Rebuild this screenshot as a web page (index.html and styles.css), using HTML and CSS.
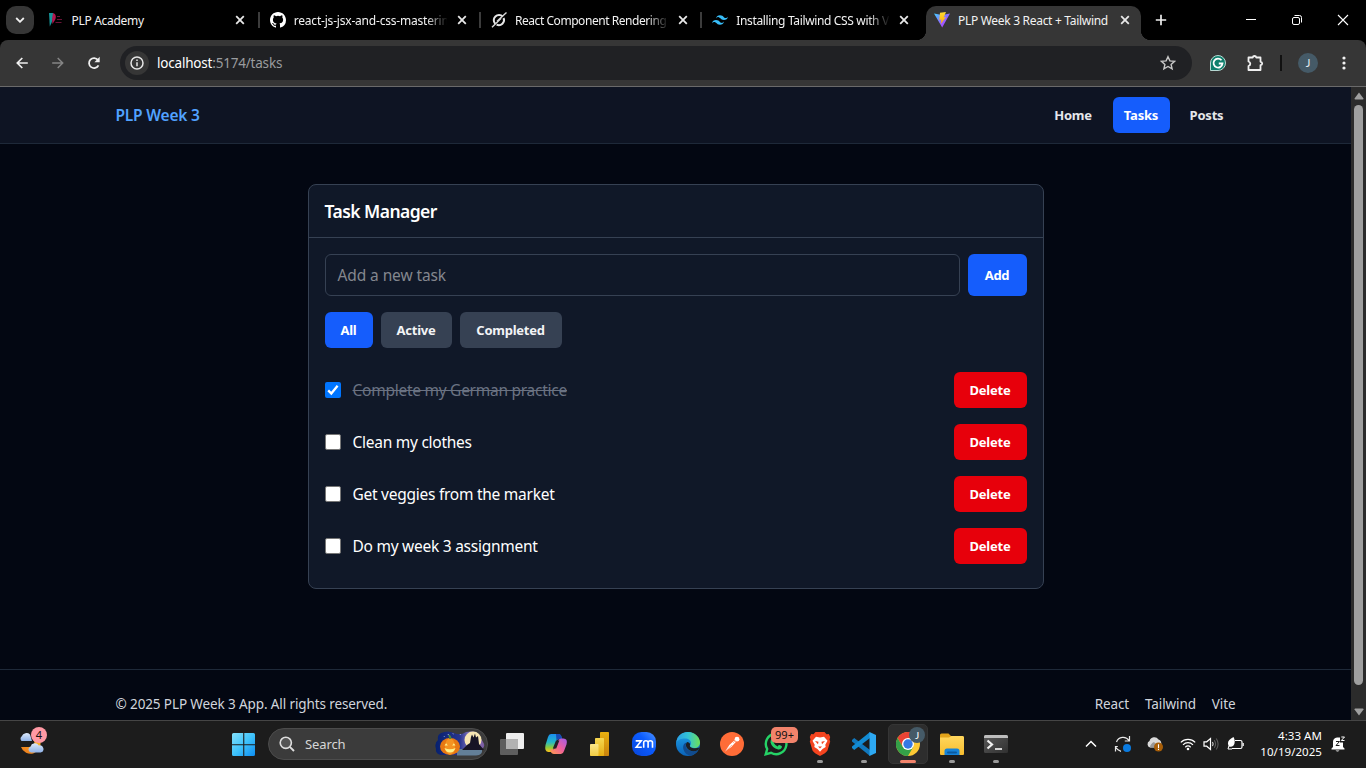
FILE: index.html
```html
<!DOCTYPE html>
<html lang="en">
<head>
<meta charset="utf-8">
<title>PLP Week 3 React + Tailwind</title>
<link rel="stylesheet" href="styles.css">
</head>
<body>
<svg class="defs" width="0" height="0">
  <defs>
    <symbol id="x" viewBox="0 0 10 10"><path d="M1.2 1.2l7.6 7.6M8.8 1.2L1.2 8.8" stroke="#e8e8e8" stroke-width="1.8" fill="none"/></symbol>
    <linearGradient id="gWin" x1="0" y1="0" x2="1" y2="1"><stop offset="0" stop-color="#84e0fb"/><stop offset=".5" stop-color="#3fc3fb"/><stop offset="1" stop-color="#0d8df2"/></linearGradient>
    <linearGradient id="gVite" x1="0" y1="0" x2="1" y2="1"><stop offset="0" stop-color="#41d1ff"/><stop offset=".6" stop-color="#9a5cff"/><stop offset="1" stop-color="#bd34fe"/></linearGradient>
    <linearGradient id="gBolt" x1="0" y1="0" x2="0" y2="1"><stop offset="0" stop-color="#ffdd35"/><stop offset="1" stop-color="#ffa800"/></linearGradient>
    <linearGradient id="gCloud" x1="0" y1="0" x2="0" y2="1"><stop offset="0" stop-color="#dce9fb"/><stop offset="1" stop-color="#8fb2e8"/></linearGradient>
    <linearGradient id="gMoon" x1="0" y1="1" x2="1" y2="0"><stop offset="0" stop-color="#e8731a"/><stop offset="1" stop-color="#fdbb2d"/></linearGradient>
    <linearGradient id="gCopA" x1="0" y1="0" x2="0" y2="1"><stop offset="0" stop-color="#1a8df0"/><stop offset=".45" stop-color="#22b8c8"/><stop offset=".75" stop-color="#8ccb3c"/><stop offset="1" stop-color="#ffc21a"/></linearGradient>
    <linearGradient id="gCopB" x1="1" y1="0" x2="0" y2="1"><stop offset="0" stop-color="#a25be8"/><stop offset=".5" stop-color="#ee5f9c"/><stop offset="1" stop-color="#ff9d4a"/></linearGradient>
    <linearGradient id="gZoom" x1="0" y1="1" x2="1" y2="0"><stop offset="0" stop-color="#0845d8"/><stop offset=".6" stop-color="#0b5cff"/><stop offset="1" stop-color="#4c92ff"/></linearGradient>
    <linearGradient id="gEdgeA" x1="0" y1="0" x2="1" y2="0"><stop offset="0" stop-color="#2a9ee6"/><stop offset=".5" stop-color="#33c4d4"/><stop offset="1" stop-color="#6ee055"/></linearGradient>
    <linearGradient id="gEdgeB" x1="0" y1="0" x2="0" y2="1"><stop offset="0" stop-color="#1fa2e8"/><stop offset="1" stop-color="#0a62b8"/></linearGradient>
    <linearGradient id="gFolder" x1="0" y1="0" x2="0" y2="1"><stop offset="0" stop-color="#ffd75e"/><stop offset="1" stop-color="#f8bd2e"/></linearGradient>
    <linearGradient id="gTerm" x1="0" y1="0" x2="1" y2="1"><stop offset="0" stop-color="#5a5a5a"/><stop offset="1" stop-color="#303030"/></linearGradient>
    <linearGradient id="gNight" x1="0" y1="0" x2="1" y2="0"><stop offset="0" stop-color="#06206e"/><stop offset=".5" stop-color="#27348f"/><stop offset=".75" stop-color="#9c86c8"/><stop offset="1" stop-color="#77599f"/></linearGradient>
    <linearGradient id="gBi" x1="0" y1="0" x2="0" y2="1"><stop offset="0" stop-color="#e9b010"/><stop offset="1" stop-color="#c9820d"/></linearGradient>
    <linearGradient id="gBj" x1="0" y1="0" x2="0" y2="1"><stop offset="0" stop-color="#f6d751"/><stop offset="1" stop-color="#e6ad10"/></linearGradient>
    <linearGradient id="gBk" x1="0" y1="0" x2="0" y2="1"><stop offset="0" stop-color="#fbe68a"/><stop offset="1" stop-color="#f2cc42"/></linearGradient>
  </defs>
</svg>

<header class="tabstrip">
  <button class="tab-search" aria-label="Search tabs"><svg width="10" height="6" viewBox="0 0 10 6"><path d="M1.2 1l3.8 3.8L8.8 1" fill="none" stroke="#f0f0f0" stroke-width="1.8"/></svg></button>
  <div class="tab">
    <svg class="fav" width="16" height="16" viewBox="0 0 16 16"><path d="M1 1h4v5L3.500 11 1.800 14.500z" fill="#15969a"/><path d="M5 1c3 1 3.500 4 2 7L4.500 12 4 7z" fill="#b3174f"/><path d="M9 4.500h3M9 7.500h5M7.500 10.500h6" stroke="#6b1236" stroke-width="1.200"/></svg>
    <span class="tab-title t1">PLP Academy</span><svg class="tx" width="10" height="10"><use href="#x"/></svg>
  </div>
  <div class="tab">
    <svg class="fav" width="16" height="16" viewBox="0 0 16 16"><path fill="#fff" d="M8 0C3.580 0 0 3.580 0 8c0 3.540 2.290 6.530 5.470 7.590.4.070.55-.17.55-.38 0-.19-.01-.82-.01-1.490-2.010.37-2.530-.49-2.690-.94-.09-.23-.48-.94-.82-1.130-.28-.15-.68-.52-.01-.53.63-.01 1.080.58 1.230.82.72 1.210 1.870.87 2.330.66.07-.52.28-.87.51-1.070-1.780-.2-3.640-.89-3.640-3.950 0-.87.31-1.590.82-2.150-.08-.2-.36-1.020.08-2.120 0 0 .67-.21 2.200.82a7.600 7.600 0 0 1 4 0c1.530-1.040 2.200-.82 2.200-.82.44 1.100.16 1.920.08 2.120.51.56.82 1.270.82 2.150 0 3.070-1.870 3.750-3.650 3.950.29.25.54.73.54 1.480 0 1.070-.01 1.930-.01 2.200 0 .21.15.46.55.38A8 8 0 0 0 16 8c0-4.420-3.580-8-8-8z"/></svg>
    <span class="tab-title t2">react-js-jsx-and-css-masterin</span><svg class="tx" width="10" height="10"><use href="#x"/></svg>
  </div>
  <div class="tab">
    <svg class="fav" width="16" height="16" viewBox="0 0 16 16"><path d="M11.800 4.600A5.200 5.200 0 1 0 4.200 11.800M12.600 6a5.200 5.200 0 0 1-7 6.700" fill="none" stroke="#e6e6e6" stroke-width="2"/><path d="M15.500.5L6 9.300M1 15.300L10.200 6.200" stroke="#d8d8d8" stroke-width="1.400"/></svg>
    <span class="tab-title t3">React Component Rendering</span><svg class="tx" width="10" height="10"><use href="#x"/></svg>
  </div>
  <div class="tab">
    <svg class="fav" width="16" height="16" viewBox="0 0 24 24"><path fill="#38bdf8" d="M12 4.800c-3.200 0-5.200 1.600-6 4.800 1.200-1.600 2.600-2.200 4.200-1.800.913.228 1.565.89 2.288 1.624C13.666 10.618 15.027 12 18 12c3.200 0 5.200-1.600 6-4.800-1.200 1.600-2.600 2.200-4.200 1.800-.913-.228-1.565-.89-2.288-1.624C16.337 6.182 14.976 4.800 12 4.800zM6 12c-3.200 0-5.200 1.600-6 4.800 1.200-1.600 2.600-2.200 4.200-1.800.913.228 1.565.89 2.288 1.624 1.177 1.194 2.538 2.576 5.512 2.576 3.200 0 5.200-1.600 6-4.800-1.200 1.600-2.600 2.200-4.200 1.800-.913-.228-1.565-.89-2.288-1.624C10.337 13.382 8.976 12 6 12z"/></svg>
    <span class="tab-title t4">Installing Tailwind CSS with V</span><svg class="tx" width="10" height="10"><use href="#x"/></svg>
  </div>
  <div class="tab active">
    <svg class="fav" width="16" height="16" viewBox="0 0 16 16"><path d="M0 1.500l8 1.500 8-1.500L8.200 15.600z" fill="url(#gVite)"/><path d="M12 0L6 .8 5.300 8l2.200-.4-.8 4.400L12 5l-2.400.4z" fill="url(#gBolt)"/></svg>
    <span class="tab-title t5">PLP Week 3 React + Tailwind</span><svg class="tx" width="10" height="10"><use href="#x"/></svg>
  </div>
  <svg class="plus" width="12" height="12" viewBox="0 0 12 12"><path d="M6 .8v10.400M.8 6h10.400" stroke="#eee" stroke-width="1.700"/></svg>
  <div class="winctl">
    <svg width="12" height="12" viewBox="0 0 12 12"><path d="M1 5.500h10" stroke="#fff"/></svg>
    <svg width="12" height="12" viewBox="0 0 12 12"><rect x="1.500" y="3.500" width="7" height="7" rx="1.500" fill="none" stroke="#fff"/><path d="M3.500 1.500h5a2 2 0 0 1 2 2v5" fill="none" stroke="#fff"/></svg>
    <svg width="12" height="12" viewBox="0 0 12 12"><path d="M1 1l10 10M11 1L1 11" stroke="#fff" stroke-width="1.100"/></svg>
  </div>
</header>

<div class="toolbar">
  <svg class="back" width="12" height="12" viewBox="0 0 12 12"><path d="M11.800 6H1.500M6.300 1L1.300 6l5 5" fill="none" stroke="#f0f0f0" stroke-width="1.700"/></svg>
  <svg class="fwd" width="12" height="12" viewBox="0 0 12 12"><path d="M.2 6h10.300M5.700 1l5 5-5 5" fill="none" stroke="#858585" stroke-width="1.500"/></svg>
  <svg class="reload" width="14" height="14" viewBox="0 0 14 14"><path d="M11.500 9.300A5 5 0 1 1 11 4" fill="none" stroke="#f0f0f0" stroke-width="1.800"/><path d="M12.700.8v5.400H7.400z" fill="#f0f0f0"/></svg>
  <div class="omnibox">
    <span class="info"><svg width="14" height="14" viewBox="0 0 14 14"><circle cx="7" cy="7" r="6" fill="none" stroke="#e6e6e6" stroke-width="1.500"/><path d="M7 6.300v4M7 3.500v1.600" stroke="#e6e6e6" stroke-width="1.500"/></svg></span>
    <span class="url">localhost<i>:5174/tasks</i></span>
    <svg class="star" width="16" height="16" viewBox="0 0 16 16"><path d="M8 1.700l1.900 4.200 4.700.4-3.500 3.100 1 4.500L8 11.500l-4.100 2.400 1-4.500-3.500-3.100 4.700-.4z" fill="none" stroke="#c8c8c8" stroke-width="1.400"/></svg>
  </div>
  <svg class="gram" width="16" height="16" viewBox="0 0 16 16"><path d="M.5 15.500V8A7.500 7.500 0 1 1 8 15.500z" fill="#0f7f6c" stroke="#b7d8d2" stroke-width="1"/><path d="M11.500 5.200A4.500 4.500 0 1 0 12.500 8.500H8.800" fill="none" stroke="#fff" stroke-width="1.800"/></svg>
  <svg class="puzzle" width="18" height="18" viewBox="0 0 18 18"><path d="M2.500 3.500h4.200q.3-1.500 1.800-1.500t1.800 1.500h4.200v4.300q1.700.2 1.700 1.700t-1.700 1.700v4.800h-12v-4q1.800-.6 1.800-2.200t-1.800-2.300z" fill="none" stroke="#f0f0f0" stroke-width="1.800" stroke-linejoin="round"/></svg>
  <span class="bar"></span>
  <span class="avatar">J</span>
  <svg class="dots" width="4" height="14" viewBox="0 0 4 14"><g fill="#f2f2f2"><circle cx="2" cy="2" r="1.600"/><circle cx="2" cy="7" r="1.600"/><circle cx="2" cy="12" r="1.600"/></g></svg>
</div>

<div class="viewport">
  <div class="page">
    <nav class="nav">
      <div class="wrap">
        <a class="brand">PLP Week 3</a>
        <div class="links"><a class="link home">Home</a><a class="link current">Tasks</a><a class="link posts">Posts</a></div>
      </div>
    </nav>
    <main class="main">
      <section class="card">
        <h1 class="card-head">Task Manager</h1>
        <div class="card-body">
          <div class="add-row"><div class="field">Add a new task</div><button class="btn blue add">Add</button></div>
          <div class="filters"><button class="btn blue all">All</button><button class="btn gray act">Active</button><button class="btn gray comp">Completed</button></div>
          <ul class="list">
            <li class="item"><span class="check on"><svg width="16" height="16" viewBox="0 0 16 16"><path d="M3.200 8.400l3.100 3.100 6.300-7.700" fill="none" stroke="#fff" stroke-width="2.300"/></svg></span><span class="label done">Complete my German practice</span><button class="btn red">Delete</button></li>
            <li class="item"><span class="check"></span><span class="label">Clean my clothes</span><button class="btn red">Delete</button></li>
            <li class="item"><span class="check"></span><span class="label">Get veggies from the market</span><button class="btn red">Delete</button></li>
            <li class="item"><span class="check"></span><span class="label">Do my week 3 assignment</span><button class="btn red">Delete</button></li>
          </ul>
        </div>
      </section>
    </main>
    <footer class="foot">
      <div class="wrap"><span class="copy">© 2025 PLP Week 3 App. All rights reserved.</span><div class="foot-links"><a>React</a><a>Tailwind</a><a>Vite</a></div></div>
    </footer>
  </div>
  <div class="scroll">
    <svg width="10" height="8" viewBox="0 0 10 8"><path d="M5 .5L9.500 6.500Q9.500 7.500 8.800 7.500H1.200Q.5 7.500.5 6.500z" fill="#9f9f9f"/></svg>
    <span class="thumb"></span>
    <svg width="10" height="8" viewBox="0 0 10 8"><path d="M5 7.500L9.500 1.500Q9.500.5 8.800.5H1.200Q.5.5.5 1.500z" fill="#9f9f9f"/></svg>
  </div>
</div>

<footer class="taskbar">
  <div class="widget">
    <svg width="26" height="27" viewBox="0 0 26 27"><path d="M3.500 12a3 3 0 0 1 .3-4.700A5 5 0 0 1 12 5.500l2 6.500z" fill="url(#gCloud)"/><path d="M3 18h8q7-1 5-6l6-.5a10 10 0 0 1-19 6.500z" fill="url(#gMoon)"/><path d="M13 23.500a3 3 0 0 1-.5-5.800 4.500 4.500 0 0 1 8.300-1.200 3.600 3.600 0 0 1 2 7z" fill="url(#gCloud)"/></svg>
    <span class="wbadge">4</span>
  </div>
  <svg class="start" width="24" height="24" viewBox="0 0 24 24"><path d="M1.500 0H11.200V11.200H0V1.500Q0 0 1.500 0zM12.300 0h9.200Q23 0 23 1.500v9.700H12.300zM0 12.300h11.200V23H1.500Q0 23 0 21.500zM12.300 12.300H23v9.200q0 1.500-1.500 1.500h-9.200z" fill="url(#gWin)"/></svg>
  <div class="search">
    <svg class="mag" width="16" height="16" viewBox="0 0 16 16"><circle cx="6.800" cy="6.800" r="5.600" fill="#555" stroke="#dedede" stroke-width="1.600"/><path d="M10.800 10.800l4.200 4.200" stroke="#dedede" stroke-width="1.900"/></svg>
    <span class="stext">Search</span>
    <svg class="halloween" width="50" height="26" viewBox="0 0 50 26"><path d="M6 2Q13-1 19 2T31 1Q42-1 45 5q1 3 3 6 3 4-1 7 0 5-7 6H8Q0 24 1 18-1 12 3 9 2 4 6 2z" fill="url(#gNight)"/><path d="M22 18h25q1 6-6 6.500H22z" fill="#637f98"/><circle cx="38" cy="9" r="8.500" fill="#f7e6b4"/><path d="M27 19l5-5 3-2 1-6 1-2.500 1.500 3 1.500-4 1 4 2-1.500 1 8 5 6z" fill="#171425"/><path d="M13 3l.4.800M18 2.500l.4.700M25 3l.4.700M9 5l.3.600" stroke="#c9d6ff" stroke-width="1"/><ellipse cx="15" cy="15.500" rx="10" ry="8.500" fill="#e87812"/><ellipse cx="15" cy="15.500" rx="5" ry="8.200" fill="#f59322"/><path d="M14 8q1-2-1-3.500l1.800-.8q2 2 1.500 4.300z" fill="#4e873b"/><path d="M9.500 14.500l1.700-2.300 1.600 2.300zM17.200 14.500l1.600-2.300 1.700 2.300zM9.500 17q5.500 2.500 11 0-1.500 4.500-5.500 4.500T9.500 17z" fill="#fff08a"/></svg>
  </div>
  <div class="apps">
    <div class="app"><svg width="24" height="24" viewBox="0 0 24 24"><rect x="6" y="1" width="18" height="16" rx="1" fill="#eee"/><rect x="0" y="7" width="18" height="16" rx="1" fill="#5e5e5e"/><rect x="6" y="7" width="12" height="10" fill="#b2b2b2"/></svg></div>
    <div class="app"><svg width="24" height="24" viewBox="0 0 24 24"><path d="M7 2h7q2.600 0 3.500 3l.7 2h-3q-2 0-2.700 2.200L9.500 17q-.8 3-3 3H4.500Q.2 20 1.500 13L4 5q.8-3 3-3z" fill="url(#gCopA)"/><path d="M12 2h2.500q2.500 0 3.200 3l.6 2h-3.100q-2 0-2.700 2z" fill="#174ab5"/><path d="M17 22h-7q-2.600 0-3.500-3l-.3-1.500h2.500Q10.500 17.500 11.300 15l2.700-6q.8-2.500 3-2.500h2.500Q24 6.500 22.500 12.500L20 19q-.8 3-3 3z" fill="url(#gCopB)"/><path d="M12 8.500h3.400l-3.200 8H8.800z" fill="#23202a"/></svg></div>
    <div class="app"><svg width="24" height="24" viewBox="0 0 24 24"><rect x="12" y="0" width="9" height="24" rx=".8" fill="url(#gBi)"/><rect x="7" y="6" width="9" height="18" rx=".8" fill="url(#gBj)"/><rect x="2" y="12" width="8.500" height="12" rx=".8" fill="url(#gBk)"/></svg></div>
    <div class="app"><svg width="24" height="24" viewBox="0 0 24 24"><rect width="24" height="24" rx="9.500" fill="url(#gZoom)"/><path d="M3.700 8.900h5.500l-5 6.300h5.600M11.700 15.800V10.500q0-1.700 2.200-1.700t2.200 1.700v5.300M16.100 15.800v-5.300q0-1.700 2.200-1.700t2.200 1.700v5.300" fill="none" stroke="#fff" stroke-width="1.600"/></svg></div>
    <div class="app"><svg width="24" height="24" viewBox="0 0 24 24"><circle cx="12" cy="12" r="12" fill="url(#gEdgeB)"/><path d="M.3 10.500C1 4 6 0 12 0c7 0 12 5.500 12 10.500 0 3.500-2.700 5.500-5.500 5.500-3 0-4.500-1-4.500-2s1-1 1-3c0-2.500-2.500-4.500-6-4.500C5 6.500 1.500 8 .3 10.500z" fill="url(#gEdgeA)"/><path d="M10.500 10.500c-3 1-4 4-3 7 1.200 4 5 6.500 8 6 3-1 5.500-3 6.800-5.500-5 3-12.500.5-12.500-4.500 0-1.200.2-2 .7-3z" fill="#114b8e"/><path d="M22.300 18c-4.500 2.500-9.800 1.200-11.700-2.500-1.200-2.200-.6-4.300.6-5.500 2.500.2 3.300 2 2.700 3.400-.5 1.600 3 4 9.600 2.100z" fill="#1d2024"/></svg></div>
    <div class="app"><svg width="24" height="24" viewBox="0 0 24 24"><circle cx="12" cy="12" r="12" fill="#ff6c37"/><path d="M5.500 19l3.800-6 5-4.500 1.500 1.500-4.500 5z" fill="#fff"/><circle cx="17" cy="7.200" r="2.400" fill="#fff"/><path d="M5 19.500l7-6.500M13 11l2.500-2.500" stroke="#ff9c7a" stroke-width=".7"/></svg></div>
    <div class="app"><svg width="24" height="24" viewBox="0 0 24 24"><path d="M1.700 22.300L3.200 17A10.300 10.300 0 1 1 7 20.800z" fill="none" stroke="#25d366" stroke-width="2.400"/><path d="M8 6.500q1.200-.7 1.800.8l.7 1.800q.2.600-.9 1.700 1.500 2.700 4 3.600l1.200-1.400q.5-.4 2.800 1 .6.400.2 1.500-1 2.400-3.600 2Q8 16 6.500 10.500 6.200 8 8 6.500z" fill="#25d366"/></svg><span class="count">99+</span></div>
    <div class="app"><svg width="24" height="24" viewBox="0 0 24 24"><path d="M7.500 0h9l2 2.300 2.300-.3 1.400 3-.7 2.500.7 2-2.700 9Q18 21 12 24 6 21 4.500 18.500L1.800 9.500l.7-2L1.800 5l1.400-3 2.300.3z" fill="#f4441f"/><path d="M8 4.800l4 .7 4-.7 3.500 4-2.200 4 .4 2.200-3.200 1.900L12 19.800l-2.500-2.900L6.300 15l.4-2.200-2.200-4z" fill="#fff"/><path d="M7 9l3.500.8-.5 2.400zM17 9l-3.500.8.5 2.400zM10 14.500h4l-2 2z" fill="#f4441f"/></svg><span class="run"></span></div>
    <div class="app"><svg width="24" height="24" viewBox="0 0 24 24"><path d="M0 8L2.200 6 18 18v6L0 9.500z" fill="#1178bd"/><path d="M0 16l2.200 2L18 6V0L0 14.500z" fill="#128bd3"/><path d="M17.500 0L24 3v18l-6.500 3z" fill="#2da9f3"/></svg><span class="run"></span></div>
    <div class="app on"><svg width="24" height="24" viewBox="0 0 24 24"><circle cx="12" cy="12" r="12" fill="#fcc934"/><path d="M1.600 6A12 12 0 0 1 22.400 6H12L6.800 15z" fill="#e94335"/><path d="M1.600 6A12 12 0 0 0 12 24l5.200-9-10.400 0z" fill="#34a048"/><circle cx="12" cy="12" r="6" fill="#fff"/><circle cx="12" cy="12" r="4.700" fill="#3478e5"/></svg><span class="cavatar">J</span><span class="run wide"></span></div>
    <div class="app"><svg width="24" height="24" viewBox="0 0 24 24"><path d="M0 3q0-1.500 1.500-1.500h7L11 4h11q2 0 2 1.500V10H0z" fill="#e2a31a"/><path d="M0 5.500h9L11.500 4H22.500Q24 4 24 5.500V22q0 1-1 1H1q-1 0-1-1z" fill="url(#gFolder)"/><path d="M4.500 23v-4q0-2.500 2.500-2.500h10q2.500 0 2.500 2.500v4z" fill="#1683d8"/><rect x="7" y="19.500" width="10" height="2" rx="1" fill="#0b5a9f"/></svg><span class="run"></span></div>
    <div class="app"><svg width="24" height="24" viewBox="0 0 24 24"><rect y="3" width="24" height="18" rx="1.500" fill="url(#gTerm)"/><path d="M0 6V4.500Q0 3 1.500 3h21Q24 3 24 4.500V6z" fill="#bdbdbd"/><path d="M3.500 8.500l4.500 4-4.500 4" fill="none" stroke="#f0f0f0" stroke-width="2.200"/><path d="M11 17h7" stroke="#f0f0f0" stroke-width="1.700"/></svg><span class="run"></span></div>
  </div>
  <div class="tray">
    <svg class="caret" width="12" height="8" viewBox="0 0 12 8"><path d="M1 6.500l5-5 5 5" fill="none" stroke="#fff" stroke-width="1.500"/></svg>
    <svg class="sync" width="18" height="18" viewBox="0 0 18 18"><path d="M2.500 7A7 7 0 0 1 15 5.500M15.500 1v5H10.800M3.800 11.500H1.500v5M2 12.500q1.500 3 5 3.800" fill="none" stroke="#e8e8e8" stroke-width="1.200"/><circle cx="13" cy="13" r="4" fill="#0a7be0"/></svg>
    <svg class="cloud" width="18" height="16" viewBox="0 0 18 16"><path d="M4 11.500A3.500 3.500 0 0 1 3.500 5 5 5 0 0 1 12.500 3.500 4 4 0 0 1 15 9v2.500z" fill="#dadada"/><path d="M4 11.500q0-3.500 4-5.500l5.500 5.500z" fill="#999"/><circle cx="12.500" cy="11" r="4.500" fill="#a85e07"/><path d="M12.500 8.200v3.700M12.500 12.700v1.200" stroke="#fff" stroke-width="1.100"/></svg>
    <svg class="wifi" width="16" height="14" viewBox="0 0 16 14"><path d="M.8 5.300a10.200 10.200 0 0 1 14.400 0M3 7.800a7 7 0 0 1 10 0M5.300 10.200a3.900 3.900 0 0 1 5.400 0" fill="none" stroke="#fff" stroke-width="1.200"/><circle cx="8" cy="12" r="1.300" fill="#fff"/></svg>
    <svg class="vol" width="16" height="14" viewBox="0 0 16 14"><path d="M1 4.800h2.700L7.500 1.500v11L3.700 9.200H1z" fill="none" stroke="#fff" stroke-width="1.200"/><path d="M9.500 5q1.300 2 0 4" fill="none" stroke="#ddd" stroke-width="1.100"/><path d="M11.300 3.200q2.600 3.800 0 7.600M13.200 1.500q3.800 5.500 0 11" fill="none" stroke="#5a5a5a" stroke-width="1.100"/></svg>
    <svg class="bat" width="17" height="14" viewBox="0 0 17 14"><path d="M8 3.500h5.500Q15 3.500 15 5v5q0 1.500-1.500 1.500H5" fill="none" stroke="#fff" stroke-width="1.200"/><path d="M16.200 6v3" stroke="#fff" stroke-width="1.200"/><path d="M6.500 0Q9 4.500 6.500 8.500 4.500 10.500 2 9.500-1.500 4 6.500 0z" fill="#fff"/><path d="M2 8.500L1 12h4" fill="none" stroke="#fff"/></svg>
    <div class="clock"><span class="time">4:33 AM</span><span class="date">10/19/2025</span></div>
    <svg class="bell" width="15" height="16" viewBox="0 0 15 16"><path d="M9 1.500H6Q2 2 2 6v5L.5 12.500v1h13v-1L12 11V6.500H9z" fill="#fff"/><path d="M4.500 14.500q2 1.800 4 0z" fill="#fff"/><path d="M5 5.500h3.500l-3.500 4h3.500" fill="none" stroke="#1c1c1c" stroke-width="1"/><path d="M10.300 1h3.200l-3.200 3.500h3.200" fill="none" stroke="#fff" stroke-width="1"/></svg>
  </div>
</footer>
</body>
</html>
```

FILE: styles.css
```css
* { box-sizing: border-box; }
body { margin: 0; width: 1366px; height: 768px; overflow: hidden; display: flex; flex-direction: column; background: #000; font-family: "Noto Sans", "Open Sans", sans-serif; color: #fff; }
svg { display: block; flex: none; }
.defs { position: absolute; }
button { border: 0; padding: 0; margin: 0; font-family: inherit; color: inherit; }
h1, ul { margin: 0; padding: 0; list-style: none; }
span, a, button { white-space: nowrap; }

/* Tab strip */
.tabstrip { height: 40px; flex: none; display: flex; align-items: center; background: #000; padding-left: 6px; }
.tab-search { width: 28px; height: 28px; border-radius: 10px; background: #363636; display: flex; align-items: center; justify-content: center; margin-right: 4.500px; }
.tab { width: 221.250px; height: 34px; margin-top: 6px; padding: 0 14.500px 6px 10px; display: flex; align-items: center; flex: none; position: relative; }
.tab:first-of-type .fav { margin-left: -1px; }
.tab::after { content: ""; position: absolute; right: 0; top: 6px; width: 2px; height: 16px; background: #3c3c3c; }
.tab:nth-of-type(4)::after, .tab.active::after { display: none; }
.tab.active { background: #363636; width: 215px; margin-left: 2px; padding-left: 8.500px; padding-right: 11px; border-radius: 10px 10px 0 0; }
.tab.active::before { content: ""; position: absolute; left: -10px; right: -10px; bottom: 0; height: 10px; background: radial-gradient(circle at 0 0, transparent 10px, #363636 10.500px) left / 10px 10px no-repeat, radial-gradient(circle at 100% 0, transparent 10px, #363636 10.500px) right / 10px 10px no-repeat; }
.tab-title { width: 153px; margin-left: 8px; font-size: 12px; line-height: 18px; padding-top: 1px; color: #f2f2f2; letter-spacing: -.3px; }
.t2, .t3, .t4 { -webkit-mask-image: linear-gradient(90deg, #000 132px, transparent 154px); mask-image: linear-gradient(90deg, #000 132px, transparent 154px); }
.t2 { letter-spacing: -.2px; }
.t3 { letter-spacing: -.45px; }
.t4 { letter-spacing: -.35px; }
.tx { margin-left: auto; }
.plus { margin-left: 14px; }
.winctl { display: flex; gap: 34px; margin-left: auto; margin-right: 17px; }

/* Address bar */
.toolbar { height: 47px; flex: none; display: flex; align-items: center; background: #363636; border-radius: 8px 8px 0 0; border-bottom: 1px solid #6a6a6a; padding-left: 16px; }
.fwd { margin-left: 24px; }
.reload { margin-left: 23px; }
.omnibox { margin-left: 19px; width: 1072px; height: 34px; border-radius: 17px; background: #202124; display: flex; align-items: center; padding: 0 16px 0 5px; }
.info { width: 24px; height: 24px; border-radius: 50%; background: #363636; display: flex; align-items: center; justify-content: center; }
.url { margin-left: 8px; font-size: 13.500px; color: #fff; letter-spacing: -.2px; }
.url i { font-style: normal; color: #9a9c9f; }
.star { margin-left: auto; }
.gram { margin-left: 18px; }
.puzzle { margin-left: 20px; }
.bar { width: 2px; height: 16px; background: #111; margin-left: 16px; }
.avatar { width: 20px; height: 20px; border-radius: 50%; background: #455a67; margin-left: 16px; font: 11px/20px "Lato", sans-serif; text-align: center; color: #e4edf2; }
.dots { margin-left: 24px; }

/* Page */
.viewport { height: 633px; flex: none; display: flex; background: #030712; }
.page { width: 1351px; display: flex; flex-direction: column; }
.wrap { width: 1120px; margin: 0 auto; display: flex; align-items: center; justify-content: space-between; }
.nav { height: 57px; background: #0e1423; border-bottom: 1px solid #1e2939; display: flex; }
.brand { color: #51a2ff; font-size: 15.500px; font-weight: 600; letter-spacing: -.2px; }
.links { display: flex; gap: 8px; }
.link { height: 36px; line-height: 36px; border-radius: 6px; text-align: center; font-size: 13px; font-weight: 700; color: #e5e7eb; letter-spacing: -.2px; }
.home { width: 63px; }
.posts { width: 58px; }
.link.current { width: 57px; background: #155dfc; color: #fff; }
.main { flex: 1; padding-top: 40px; display: flex; justify-content: center; align-items: flex-start; }
.card { width: 736px; background: #101828; border: 1px solid #364153; border-radius: 8px; }
.card-head { height: 53px; padding: 0 16px; border-bottom: 1px solid #364153; font-size: 17.500px; line-height: 53px; font-weight: 600; letter-spacing: -.55px; }
.card-body { padding: 16px; display: flex; flex-direction: column; gap: 16px; }
.add-row, .filters { display: flex; gap: 8px; }
.field { flex: 1; height: 42px; border: 1px solid #364153; border-radius: 6px; padding-left: 12px; line-height: 41px; font-size: 15.500px; color: #84878e; letter-spacing: -.1px; }
.btn { height: 36px; border-radius: 6px; font-size: 13px; font-weight: 700; line-height: 36px; color: #fff; letter-spacing: -.25px; }
.blue { background: #155dfc; }
.gray { background: #364153; color: #f3f4f6; }
.red { background: #e7000b; width: 73px; margin-left: auto; }
.add { width: 59px; height: 42px; }
.all { width: 48px; }
.act { width: 71px; }
.comp { width: 102px; }
.item { height: 52px; display: flex; align-items: center; }
.check { width: 16px; height: 16px; border: 1px solid #767676; border-radius: 2px; background: #fff; }
.check.on { background: #0075ff; border: 0; }
.label { margin-left: 12px; font-size: 15.500px; line-height: 24px; letter-spacing: -.26px; }
.done { color: #6a7282; text-decoration: line-through; }
.foot { height: 51px; border-top: 1px solid #1e2939; padding-top: 24px; font-size: 13.500px; line-height: 20px; color: #d1d5dc; letter-spacing: -.11px; }
.foot-links { display: flex; gap: 16px; }
.scroll { width: 15px; background: #2b2b2b; display: flex; flex-direction: column; align-items: center; justify-content: space-between; padding: 5px 0 4px 0; }
.thumb { width: 9px; height: 580px; border-radius: 4.500px; background: #9f9f9f; margin-top: -1px; margin-bottom: 17px; }

/* Taskbar */
.taskbar { height: 48px; flex: none; background: #1c1c1c; border-top: 1px solid #454545; display: flex; align-items: center; padding-bottom: 1px; }
.widget { width: 28px; height: 30px; margin-left: 18px; position: relative; }
.wbadge { position: absolute; left: 13px; top: -2px; width: 16px; height: 16px; border-radius: 50%; background: #ff99a4; color: #111; font-size: 11px; line-height: 16px; text-align: center; }
.start { margin-left: 186px; margin-top: 1px; }
.search { width: 220px; height: 32px; margin-left: 12px; border-radius: 16px; background: #3b3b3b; border: 1px solid #4c4c4c; display: flex; align-items: center; padding-left: 10px; }
.stext { margin-left: 10px; font-size: 13px; color: #d6d6d6; letter-spacing: -.1px; }
.halloween { margin-left: auto; margin-right: 2px; }
.apps { display: flex; margin-left: 2px; height: 47px; }
.app { width: 44px; display: flex; align-items: center; justify-content: center; position: relative; }
.app.on::before { content: ""; position: absolute; inset: 3px 2px 4px; background: #2d2d2d; border: 1px solid #353535; border-radius: 5px; }
.app svg { position: relative; }
.run { position: absolute; bottom: 5px; left: 19px; width: 6px; height: 3px; border-radius: 2px; background: #9a9a9a; }
.run.wide { width: 16px; left: 14px; background: #f2836b; }
.count { position: absolute; left: 17px; top: 6px; width: 27px; height: 16px; border-radius: 5px; background: #f2836b; color: #111; font-size: 11px; line-height: 16px; text-align: center; }
.cavatar { position: absolute; left: 23px; top: 6px; width: 16px; height: 16px; border-radius: 50%; background: #455a67; color: #fff; font: 10px/16px "Lato", sans-serif; text-align: center; }
.tray { display: flex; align-items: center; margin-left: auto; padding-right: 20px; }
.sync { margin-left: 17px; }
.cloud { margin-left: 14px; }
.wifi { margin-left: 16px; }
.vol { margin-left: 7px; }
.bat { margin-left: 8px; }
.clock { width: 78px; display: flex; flex-direction: column; align-items: flex-end; font-size: 11.500px; line-height: 16px; letter-spacing: .05px; }
.bell { margin-left: 9px; }
```
